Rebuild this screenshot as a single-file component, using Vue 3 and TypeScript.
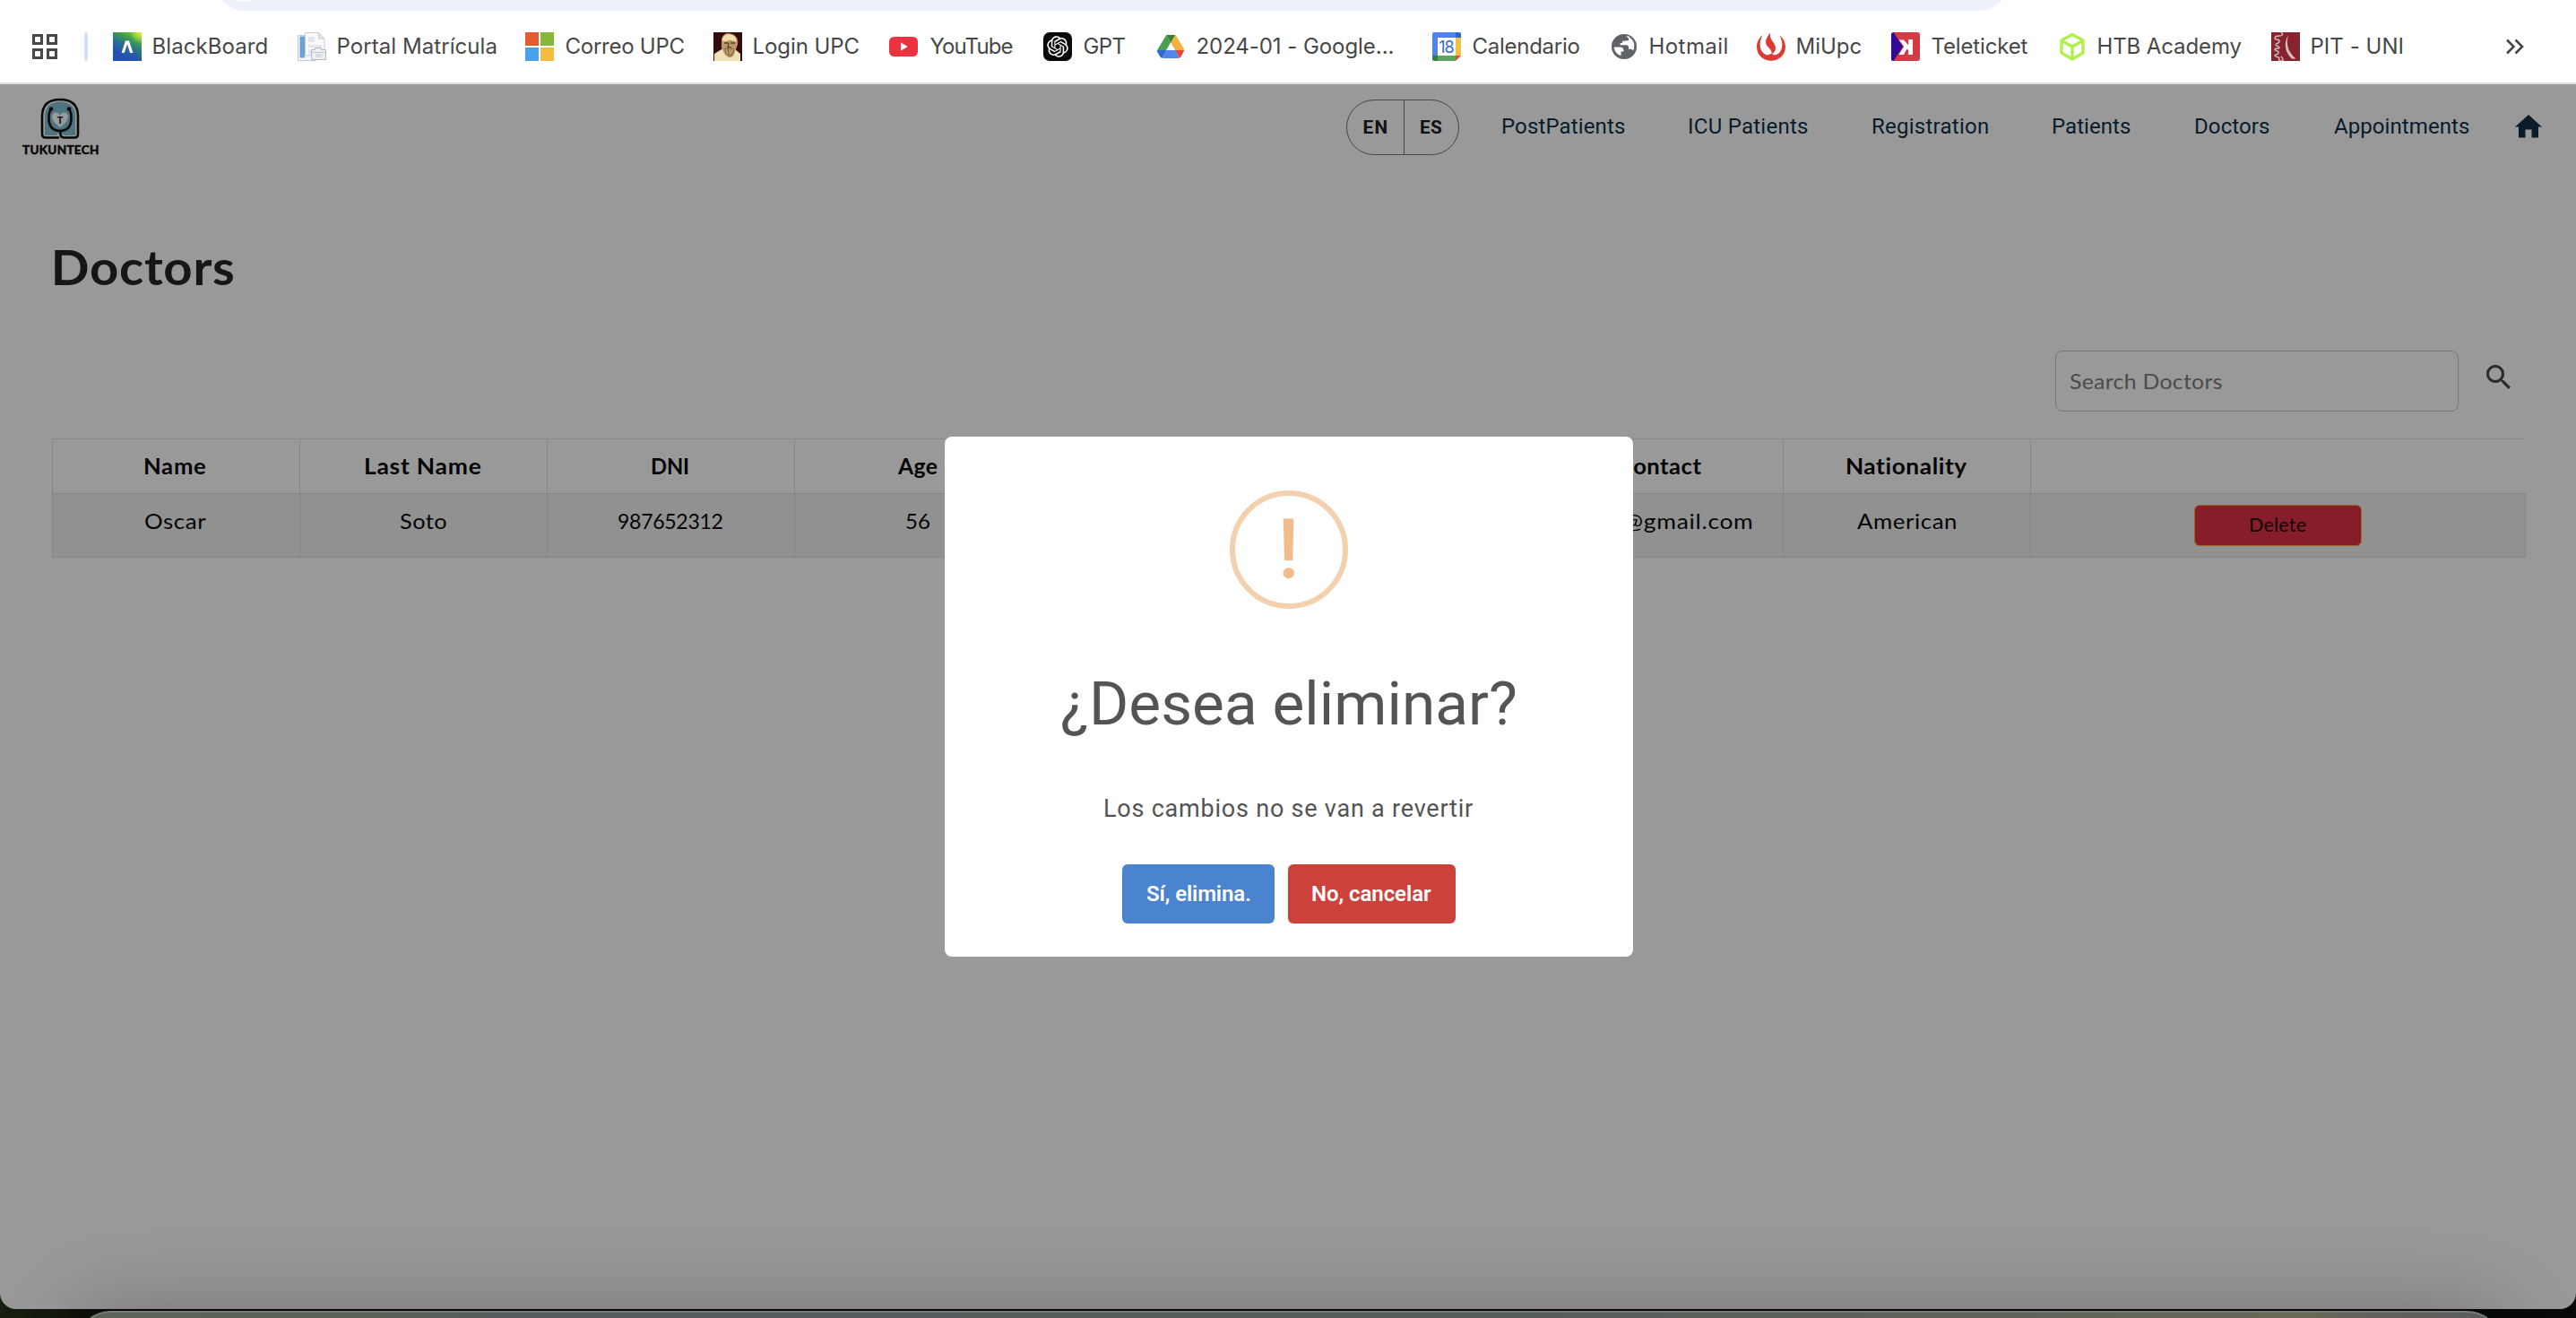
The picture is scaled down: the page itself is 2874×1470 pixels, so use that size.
<script setup lang="ts">
import type { Directive } from 'vue'

interface Bookmark {
  id: string
  label: string
  x: number
  w: number
}

interface Cell {
  text: string
  w: number
}

// Spreads the letters so that the visible glyphs span exactly the given width.
// With the "wide" modifier most of the surplus goes into the letterforms.
const vFit: Directive<HTMLElement, number> = {
  mounted(el, { value, modifiers }) {
    const text = el.textContent ?? ''
    const cs = getComputedStyle(el)
    const ctx = document.createElement('canvas').getContext('2d')
    if (!ctx || !value || text.length < 2) return
    ctx.font = `${cs.fontWeight} ${cs.fontSize} ${cs.fontFamily}`
    const m = ctx.measureText(text)
    const ink = m.actualBoundingBoxLeft + m.actualBoundingBoxRight
    const scale = modifiers.wide ? 1 + (value / ink - 1) * 0.65 : 1
    const inner = value / scale
    el.style.width = `${inner}px`
    el.style.textIndent = `${m.actualBoundingBoxLeft}px`
    el.style.letterSpacing = `${(inner - ink) / (text.length - 1)}px`
    if (scale !== 1) {
      el.style.marginRight = `${value - inner}px`
      el.style.transform = `scaleX(${scale})`
    }
  },
}

const bookmarks: Bookmark[] = [
  { id: 'bb', label: 'BlackBoard', x: 126, w: 126 },
  { id: 'portal', label: 'Portal Matrícula', x: 332, w: 176 },
  { id: 'ms', label: 'Correo UPC', x: 586, w: 132 },
  { id: 'login', label: 'Login UPC', x: 796, w: 117 },
  { id: 'yt', label: 'YouTube', x: 992, w: 92 },
  { id: 'gpt', label: 'GPT', x: 1164, w: 46 },
  { id: 'drive', label: '2024-01 - Google...', x: 1290, w: 219 },
  { id: 'cal', label: 'Calendario', x: 1598, w: 119 },
  { id: 'globe', label: 'Hotmail', x: 1796, w: 85 },
  { id: 'miupc', label: 'MiUpc', x: 1960, w: 71 },
  { id: 'tele', label: 'Teleticket', x: 2110, w: 107 },
  { id: 'htb', label: 'HTB Academy', x: 2296, w: 159 },
  { id: 'pit', label: 'PIT - UNI', x: 2534, w: 101 },
]
const slot = (i: number) =>
  i < bookmarks.length - 1 ? bookmarks[i + 1].x - bookmarks[i].x : 180

const links = [
  { text: 'PostPatients', w: 137, gap: 48 },
  { text: 'ICU Patients', w: 132, gap: 72 },
  { text: 'Registration', w: 129, gap: 72 },
  { text: 'Patients', w: 87, gap: 72 },
  { text: 'Doctors', w: 83, gap: 72 },
  { text: 'Appointments', w: 151, gap: 72 },
]

const heads: Cell[] = [
  { text: 'Name', w: 69 },
  { text: 'Last Name', w: 130 },
  { text: 'DNI', w: 41 },
  { text: 'Age', w: 45 },
  { text: '', w: 0 },
  { text: '', w: 0 },
  { text: 'Contact', w: 93 },
  { text: 'Nationality', w: 135 },
  { text: '', w: 0 },
]
const row: Cell[] = [
  { text: 'Oscar', w: 68 },
  { text: 'Soto', w: 52 },
  { text: '987652312', w: 116 },
  { text: '56', w: 26 },
  { text: '', w: 0 },
  { text: '', w: 0 },
  { text: 'oscar@gmail.com', w: 208 },
  { text: 'American', w: 110 },
]
</script>

<template>
  <div class="screen">
    <div class="chrome">
      <div class="omnibox"><span class="site-info"></span></div>
      <div class="bookmarks">
        <svg class="apps" width="28" height="28" viewBox="0 0 28 28" fill="none" stroke="#474747" stroke-width="3">
          <rect x="1.5" y="1.5" width="9" height="9" /><rect x="17.5" y="1.5" width="9" height="9" />
          <rect x="1.5" y="17.5" width="9" height="9" /><rect x="17.5" y="17.5" width="9" height="9" />
        </svg>
        <span class="sep"></span>
        <div v-for="(b, i) in bookmarks" :key="b.id" class="bookmark" :style="{ width: slot(i) + 'px' }">
          <svg width="32" height="32" viewBox="0 0 32 32">
            <template v-if="b.id === 'bb'">
              <defs>
                <linearGradient id="bbg" x1="0.75" y1="0" x2="0.35" y2="0.8">
                  <stop offset="0" stop-color="#7ccb3a" /><stop offset=".3" stop-color="#3f9d4c" />
                  <stop offset=".62" stop-color="#2a6f8f" /><stop offset="1" stop-color="#2350b4" />
                </linearGradient>
                <radialGradient id="bbc" cx="1" cy="0" r=".4">
                  <stop offset="0" stop-color="#e2f03c" /><stop offset="1" stop-color="#e2f03c" stop-opacity="0" />
                </radialGradient>
              </defs>
              <rect width="32" height="32" fill="url(#bbg)" /><rect width="32" height="32" fill="url(#bbc)" />
              <path d="M9.500 23 14 9.500h4L22.500 23h-3.400L16 13.200 12.700 23z" fill="#fff" />
            </template>
            <template v-else-if="b.id === 'portal'">
              <path d="M.5 3.500h20v28H.5z" fill="#f4f6f8" stroke="#c5cbd2" />
              <path d="M2.500 4.500H8v24H2.500z" fill="#6ba3d6" />
              <path d="M8.500 .5h15l6.500 6.500v19H8.500z" fill="#f8f9fb" stroke="#c8cdd4" />
              <path d="M23.500 .5V7H30z" fill="#e2e5ea" stroke="#c8cdd4" />
              <path d="M12 5h7v6h-7zM12 14h15v3H12zM12 19h6v6h-6z" fill="#e4e7ee" />
              <path d="M15.500 19.500h4v-2h7v2h5v11h-16z" fill="#eceef2" stroke="#b4bac4" />
              <path d="M15.500 22.500h16" stroke="#c3c8d0" /><path d="M20 24.500h7v3h-7z" fill="#d3d7e2" />
            </template>
            <template v-else-if="b.id === 'ms'">
              <path d="M0 0h15v15H0z" fill="#e05c33" /><path d="M17 0h15v15H17z" fill="#8ab637" />
              <path d="M0 17h15v15H0z" fill="#4aa0ea" /><path d="M17 17h15v15H17z" fill="#f5bb41" />
            </template>
            <template v-else-if="b.id === 'login'">
              <rect width="32" height="32" fill="#340a0a" />
              <path d="M1 32V24l8-5 14-1 7 6v8z" fill="#f1e2b5" />
              <path d="M9 8c1-6 6-7.500 10-6.500 6 1 9 6 8 12l-2 6-3 7-4 2-5-3-4-8z" fill="#b99a68" />
              <path d="M10 8c1-5 5-6.500 9-5.500 5 1 7 4 6 8l-6-2-8 2z" fill="#f0dfae" />
              <path d="M12 12h4l1 1M19 12h5M17 13l-1 4h4" stroke="#5d3c24" stroke-width="1.300" fill="none" />
              <path d="M12 18l4-1 6 1 1 4-3 5-4-1-3-4z" fill="#8e6f48" />
              <path d="M14 19l2 5M18 18l1 7M21 19l-1 4" stroke="#dcc794" stroke-width="1" />
            </template>
            <template v-else-if="b.id === 'yt'">
              <rect y="5" width="32" height="22" rx="5.500" fill="#eb3340" /><path d="M13 11.500v9l7.800-4.500z" fill="#fff" />
            </template>
            <template v-else-if="b.id === 'gpt'">
              <rect width="32" height="32" rx="7" fill="#0b0b0b" />
              <path transform="translate(4.200 4.200) scale(.983)" fill="#fff" d="M22.2819 9.8211a5.9847 5.9847 0 0 0-.5157-4.9108 6.0462 6.0462 0 0 0-6.5098-2.9A6.0651 6.0651 0 0 0 4.9807 4.1818a5.9847 5.9847 0 0 0-3.9977 2.9 6.0462 6.0462 0 0 0 .7427 7.0966 5.98 5.98 0 0 0 .511 4.9107 6.051 6.051 0 0 0 6.5146 2.9001A5.9847 5.9847 0 0 0 13.2599 24a6.0557 6.0557 0 0 0 5.7718-4.2058 5.9894 5.9894 0 0 0 3.9977-2.9001 6.0557 6.0557 0 0 0-.7475-7.0729zm-9.022 12.6081a4.4755 4.4755 0 0 1-2.8764-1.0408l.1419-.0804 4.7783-2.7582a.7948.7948 0 0 0 .3927-.6813v-6.7369l2.02 1.1686a.071.071 0 0 1 .038.052v5.5826a4.504 4.504 0 0 1-4.4945 4.4944zm-9.6607-4.1254a4.4708 4.4708 0 0 1-.5346-3.0137l.142.0852 4.783 2.7582a.7712.7712 0 0 0 .7806 0l5.8428-3.3685v2.3324a.0804.0804 0 0 1-.0332.0615L9.74 19.9502a4.4992 4.4992 0 0 1-6.1408-1.6464zM2.3408 7.8956a4.485 4.485 0 0 1 2.3655-1.9728V11.6a.7664.7664 0 0 0 .3879.6765l5.8144 3.3543-2.0201 1.1685a.0757.0757 0 0 1-.071 0l-4.8303-2.7865A4.504 4.504 0 0 1 2.3408 7.872zm16.5963 3.8558L13.1038 8.364 15.1192 7.2a.0757.0757 0 0 1 .071 0l4.8303 2.7913a4.4944 4.4944 0 0 1-.6765 8.1042v-5.6772a.79.79 0 0 0-.407-.667zm2.0107-3.0231l-.142-.0852-4.7735-2.7818a.7759.7759 0 0 0-.7854 0L9.409 9.2297V6.8974a.0662.0662 0 0 1 .0284-.0615l4.8303-2.7866a4.4992 4.4992 0 0 1 6.6802 4.66zM8.3065 12.863l-2.02-1.1638a.0804.0804 0 0 1-.038-.0567V6.0742a4.4992 4.4992 0 0 1 7.3757-3.4537l-.142.0805L8.704 5.459a.7948.7948 0 0 0-.3927.6813zm1.0976-2.3654l2.602-1.4998 2.6069 1.4998v2.9994l-2.5974 1.4997-2.6067-1.4997Z" />
            </template>
            <template v-else-if="b.id === 'drive'">
              <path d="M11.300 3 16.200 11.500 6.500 28.500Q5 28.500 4.300 27L1.300 22q-.6-1 0-2.500z" fill="#4a9f52" />
              <path d="M21 3q1 .3 1.600 1.500L30.500 18q.6 1 .5 2H21L11.300 3z" fill="#f3b13c" />
              <path d="M11.300 3h9.700L16.200 11.500z" fill="#34803f" />
              <path d="M16.200 11.500 21 20h-9.700z" fill="#fff" />
              <path d="M1 20h10.300L6.400 28.600Q5 28.300 4.300 27L1.500 22z" fill="#3367d1" />
              <path d="M11.300 20H21l4.900 8.600q-.7.400-1.700.400H8.300q-1 0-1.900-.4z" fill="#5186ec" />
              <path d="M21 20h10q0 1-.6 2l-2.700 4.900q-.6 1.200-1.800 1.700z" fill="#dc4b3c" />
            </template>
            <template v-else-if="b.id === 'cal'">
              <path d="M2 0h24v6H6v20H0V2q0-2 2-2z" fill="#5083ed" /><path d="M26 0h4q2 0 2 2v4h-6z" fill="#3163c9" />
              <path d="M26 6h6v20h-6z" fill="#f2c043" /><path d="M6 26h20v6H6z" fill="#58a65c" />
              <path d="M0 26h6v6H2q-2 0-2-2z" fill="#34803f" /><path d="M26 26h6l-6 6z" fill="#dc4b3c" />
              <text x="15.500" y="22.800" font-size="18" text-anchor="middle" fill="#3769d0" class="cal-day">18</text>
            </template>
            <template v-else-if="b.id === 'globe'">
              <circle cx="16" cy="16" r="14" fill="#5f6368" />
              <path d="M4.600 16.500h6.600q4.300 0 4.300 3.800v1.200h-3v4.500q-7-2-7.900-9.500zM17 4.600l2.300.3v1.700q0 3.100-3 3.100h-2.300v2.300h-2.300v2.300h7q2.300 0 2.300 2.300v2.100h2.300q2 0 2.700 1.700 1.500-3 1.300-6-.5-6-5.300-8.700v-1.200z" fill="#fff" />
              <path d="M21 6.500 17 4.500v4.800h4z" fill="#5f6368" />
            </template>
            <template v-else-if="b.id === 'miupc'">
              <path d="M6.500 3C1 8-.5 13 .2 18.500 1 26 8 31.800 16 31.800S31 26 31.800 18.500C32.400 13 31 8 25.500 3.500c3 6 3.500 11 2.200 15-1.500 4-4 6-7.200 7L16 24l-4.500 1.500c-3-1-6-3.500-7.200-7C3 14 3.500 9 6.500 3z" fill="#dc3932" />
              <path d="M15 .5c-3 4-5 7-5 10.500 0 6 8 7 6.500 13.500C21 22 21.500 18.500 20.500 15c-1.500-5-6.500-6.500-5.500-14.500z" fill="#dc3932" />
            </template>
            <template v-else-if="b.id === 'tele'">
              <rect width="32" height="32" rx="3" fill="#d63a44" />
              <path d="M2.500 0 13 16 2.500 32Q0 32 0 29.500v-27Q0 .5 2.500 0z" fill="#330a94" />
              <path d="M24 8v17h-4.800v-5l-1.700-1.500L14 25H8.500l5.700-9L10 10l-1.500-1.500H14l5.200 6V8z" fill="#fff" />
            </template>
            <template v-else-if="b.id === 'htb'">
              <path d="M16 2.500 28 9v14l-12 7L4 23V9zM4.500 9.500 16 16l11.500-6.500M16 16v13.500" fill="none" stroke="#b0f04a" stroke-width="3.300" stroke-linejoin="round" />
            </template>
            <template v-else>
              <rect width="32" height="32" fill="#88242e" />
              <path d="M11 0c3 3 1 4-2 4s-5 1-5 3 5 0 5 3-4 2-4 4 4 1 4 3-4 0-5 2 5 1 4 4-4 1-4 3 5 1 5 3-2 3 2 3 1-4 0-5" fill="none" stroke="#d5b9bb" stroke-width="1.500" />
              <path d="M19 3c-6 10-3 20 4 26.500h4.500C19 22 16 14 19 3z" fill="#d8bfc1" />
            </template>
          </svg>
          <span v-fit="b.w" class="fit">{{ b.label }}</span>
        </div>
        <svg class="more" width="22" height="20" viewBox="0 0 22 20" fill="none" stroke="#474747" stroke-width="2.600">
          <path d="m2 2.500 7.500 7.500L2 17.500M11.500 2.500 19 10l-7.500 7.500" />
        </svg>
      </div>
    </div>

    <div class="page">
      <header class="toolbar">
        <div class="logo">
          <svg width="44" height="48" viewBox="0 0 44 48" fill="none">
            <path d="M5 42V19Q6 5 22 4.500 38 5 39 19v23H27l-5-3-5 3z" fill="#4e7480" />
            <path d="M20 44.500H6q-4 0-4-4V20Q2.500 2 22 2t20 18v20.500q0 4-4 4H27q-4.500 0-4.500-4V37" stroke="#050708" stroke-width="2.600" stroke-linecap="round" />
            <path d="M11 14Q9 18 9.500 24 10 36.500 22 37q12-.5 12.500-13 .5-6-1.500-10" stroke="#050708" stroke-width="2.600" />
            <circle cx="12" cy="12.500" r="2.300" fill="#050708" /><circle cx="32" cy="12.500" r="2.300" fill="#050708" />
            <path d="M22 33Q13 27 13 21.500t4.500-5q3 0 4.500 3 1.500-3 4.500-3 4.500 0 4.500 5T22 33z" fill="#989b9c" />
            <text x="22" y="28.500" font-size="11" text-anchor="middle" fill="#0a0a0a" class="logo-t">T</text>
          </svg>
          <span v-fit="85" class="fit">TUKUNTECH</span>
        </div>
        <div class="lang">
          <span><b v-fit="26" class="fit">EN</b></span>
          <span><b v-fit="24" class="fit">ES</b></span>
        </div>
        <nav>
          <a v-for="l in links" :key="l.text" :style="{ marginLeft: l.gap + 'px' }"><span v-fit="l.w" class="fit">{{ l.text }}</span></a>
        </nav>
        <svg class="home" width="30" height="26" viewBox="0 0 30 26" fill="#081c2b">
          <path d="M15 0 0 13.500h4V25.500h7.500V16.500h7v9H26V13.500h4z" />
        </svg>
      </header>

      <h1><span v-fit.wide="199" class="fit">Doctors</span></h1>

      <div class="search">
        <div class="field"><span v-fit.wide="170" class="fit">Search Doctors</span></div>
        <svg width="27" height="27" viewBox="3 3 17.500 17.500" fill="#2b2b2f">
          <path d="M15.500 14h-.79l-.28-.27C15.410 12.590 16 11.110 16 9.500 16 5.910 13.090 3 9.500 3S3 5.910 3 9.500 5.910 16 9.500 16c1.610 0 3.090-.59 4.230-1.570l.27.28v.79l5 4.990L20.490 19l-4.990-5zm-6 0C7.010 14 5 11.990 5 9.500S7.010 5 9.500 5 14 7.010 14 9.500 11.990 14 9.500 14z" />
        </svg>
      </div>

      <div class="table">
        <div class="tr head">
          <div v-for="(c, i) in heads" :key="i" class="td"><span v-if="c.text" v-fit.wide="c.w" class="fit">{{ c.text }}</span></div>
        </div>
        <div class="tr body">
          <div v-for="(c, i) in row" :key="i" class="td"><span v-if="c.text" v-fit.wide="c.w" class="fit">{{ c.text }}</span></div>
          <div class="td last"><button class="delete"><span v-fit.wide="63" class="fit">Delete</span></button></div>
        </div>
      </div>

      <div class="backdrop">
        <div class="modal">
          <div class="warn"><span>!</span></div>
          <h2><span v-fit="506" class="fit">¿Desea eliminar?</span></h2>
          <p><span v-fit="410" class="fit">Los cambios no se van a revertir</span></p>
          <div class="actions">
            <button class="yes"><span v-fit="116" class="fit">Sí, elimina.</span></button>
            <button class="no"><span v-fit="133" class="fit">No, cancelar</span></button>
          </div>
        </div>
      </div>
    </div>
    <div class="dock"></div>
  </div>
</template>

<style>
body {
  margin: 0;
  overflow: hidden;
}
</style>

<style scoped>
.screen {
  position: relative;
  width: 2874px;
  height: 1470px;
  overflow: hidden;
  background: linear-gradient(90deg, #172110 0, #10130a 90px, #060906 140px, #060906 2700px, #08090a 100%);
  font-family: Roboto, sans-serif;
}
.fit {
  display: inline-block;
  white-space: nowrap;
  text-align: left;
  flex: none;
  transform-origin: left center;
}
.chrome {
  position: relative;
  box-sizing: border-box;
  height: 94px;
  padding-top: 12px;
  background: #fff;
  border-bottom: 2px solid #dedede;
  overflow: hidden;
}
.omnibox {
  position: absolute;
  left: 239px;
  top: -56px;
  width: 2003px;
  height: 68px;
  border-radius: 34px;
  background: #edf1fa;
}
.site-info {
  position: absolute;
  left: 5px;
  top: 2px;
  width: 56px;
  height: 56px;
  border-radius: 50%;
  background: #fff;
}
.bookmarks {
  display: flex;
  align-items: center;
  height: 80px;
  font-family: Inter, sans-serif;
  font-size: 24px;
  line-height: 30px;
  color: #474747;
}
.apps {
  margin-left: 36px;
}
.sep {
  width: 4px;
  height: 32px;
  margin: 0 28px 0 30px;
  border-radius: 2px;
  background: #d3e0fb;
}
.bookmark {
  display: flex;
  align-items: center;
  gap: 13.500px;
  flex: none;
}
.cal-day {
  font-family: Inter, sans-serif;
  letter-spacing: -1px;
}
.more {
  margin-left: 81px;
}
.page {
  position: relative;
  height: 1366px;
  background: #999;
  border-radius: 0 0 18px 18px;
  overflow: hidden;
}
.toolbar {
  display: flex;
  align-items: center;
  height: 96px;
  color: #081c2b;
}
.logo {
  display: flex;
  flex-direction: column;
  align-items: center;
  width: 85px;
  margin: -1px 1392px 0 25px;
  font: 700 13.500px/16px Lato, sans-serif;
  color: #050505;
  -webkit-text-stroke: 0.500px #050505;
}
.logo svg {
  margin: 0 2px 2px 0;
}
.logo-t {
  font-family: Lato, sans-serif;
}
.lang {
  display: flex;
  box-sizing: border-box;
  width: 126px;
  height: 62px;
  border: 1px solid #47474d;
  border-radius: 31px;
  font-size: 20.800px;
  line-height: 60px;
  color: #121212;
}
.lang span {
  display: flex;
  justify-content: center;
  width: 61px;
}
.lang span:first-child {
  width: 64px;
  border-right: 1px solid #47474d;
}
.lang b {
  font-weight: 700;
}
nav {
  display: flex;
  margin-top: -2px;
  font-size: 24px;
  line-height: 30px;
}
.home {
  margin: -2px 0 0 51px;
}
h1 {
  margin: 78px 0 0 61px;
  height: 60px;
  font: 700 54px/60px Lato, sans-serif;
  color: #151617;
}
.search {
  display: flex;
  justify-content: flex-end;
  margin: 63px 73px 0 0;
  font: 400 24px/66px Lato, sans-serif;
  color: #4b4b4b;
}
.field {
  display: flex;
  box-sizing: border-box;
  width: 450px;
  height: 68px;
  padding-left: 15px;
  border: 1px solid #777;
  border-radius: 8px;
}
.search svg {
  margin: 16px 0 0 31px;
}
.table {
  width: 2760px;
  margin: 30px 0 0 58px;
  font-family: Lato, sans-serif;
  font-size: 24px;
  line-height: 60px;
  color: #050505;
}
.tr {
  display: grid;
  grid-template-columns: repeat(8, 275.900px) 1fr;
  border-top: 1px solid #85858a;
}
.td {
  display: flex;
  justify-content: center;
  align-items: flex-start;
  box-sizing: border-box;
  border-left: 1px solid #85858a;
  padding-right: 1px;
}
.head .td {
  height: 60px;
  font-weight: 700;
}
.body {
  background: #919191;
  border-bottom: 1px solid #85858a;
}
.body .td {
  height: 70px;
}
.body .last {
  border-right: 1px solid #85858a;
}
button {
  display: flex;
  justify-content: center;
  align-items: center;
  padding: 0;
  border: 0;
  font-family: inherit;
}
.delete {
  width: 187px;
  height: 46px;
  margin-top: 12px;
  border: 1px solid #a2661f;
  border-radius: 6px;
  background: #861e2a;
  font-size: 21px;
  line-height: 26px;
  color: #100506;
}
.delete .fit {
  margin-top: -2px;
}
.backdrop {
  position: absolute;
  inset: 0;
  display: flex;
  justify-content: center;
  align-items: center;
}
.modal {
  display: flex;
  flex-direction: column;
  align-items: center;
  box-sizing: border-box;
  width: 768px;
  height: 580px;
  margin-left: 2px;
  padding-top: 60px;
  border-radius: 8px;
  background: #fff;
  color: #545454;
}
.warn {
  display: flex;
  justify-content: center;
  box-sizing: border-box;
  width: 132px;
  height: 132px;
  border: 6px solid #f3d0ae;
  border-radius: 50%;
  font-size: 92px;
  font-weight: 500;
  line-height: 120px;
  color: #f0bc8c;
}
.warn span {
  margin-left: -1px;
}
h2 {
  margin: 66px 0 0;
  font-weight: 400;
  font-size: 67.500px;
  line-height: 80px;
}
p {
  margin: 61px 0 0;
  font-size: 27px;
  line-height: 32px;
}
.actions {
  display: flex;
  gap: 15px;
  margin-top: 46px;
}
.actions button {
  height: 66px;
  border-radius: 6px;
  font-size: 24px;
  font-weight: 600;
  color: #fff;
}
.yes {
  width: 170px;
  background: #4a83d0;
}
.no {
  width: 187px;
  background: #cc423b;
}
.dock {
  position: absolute;
  left: 84px;
  top: 1462px;
  box-sizing: border-box;
  width: 2708px;
  height: 120px;
  border: 2px solid #727b74;
  border-radius: 40px;
  background: linear-gradient(90deg, #5d6557 0, #596155 12%, #525c5d 18%, #555d5a 60%, #6a6758 92%, #655f5c 95%, #5b5b5b 100%);
  box-shadow: 0 0 90px rgba(0, 0, 0, 0.260);
}
</style>
